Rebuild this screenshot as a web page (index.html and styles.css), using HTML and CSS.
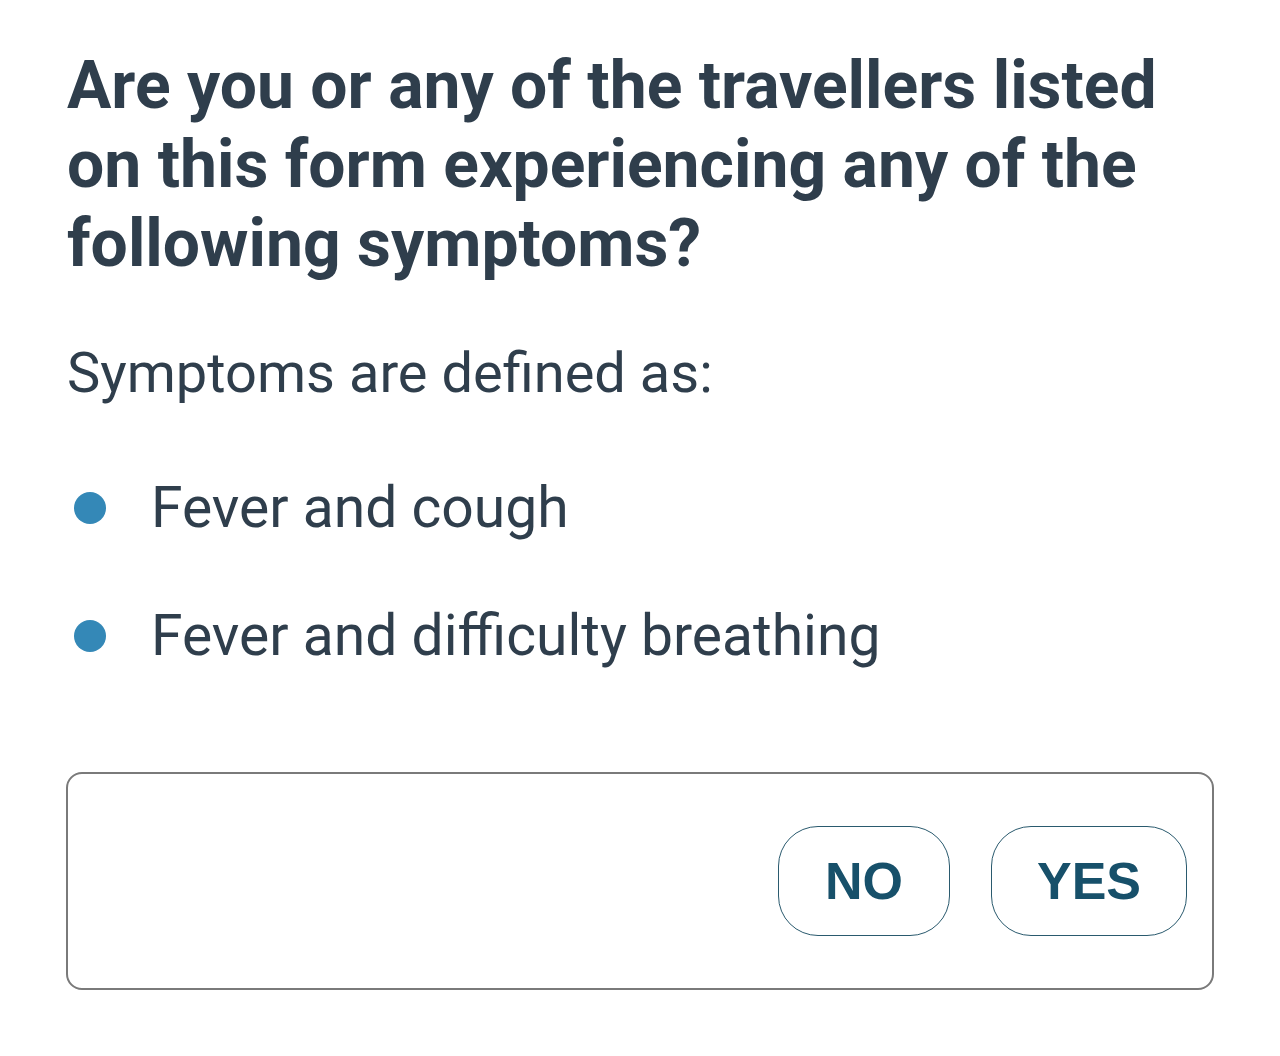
FILE: index.html
```html
<!DOCTYPE html>
<html>
<head>
<meta charset="utf-8">
<link rel="stylesheet" href="styles.css">
</head>
<body>
<main class="page">
  <h1 class="question">Are you or any of the travellers listed on this form experiencing any of the following symptoms?</h1>
  <p class="intro">Symptoms are defined as:</p>
  <ul class="symptoms">
    <li class="symptom"><span class="dot"></span><span>Fever and cough</span></li>
    <li class="symptom"><span class="dot"></span><span>Fever and difficulty breathing</span></li>
  </ul>
  <div class="answer-box">
    <button class="btn btn-no">NO</button>
    <button class="btn btn-yes">YES</button>
  </div>
</main>
</body>
</html>
```
FILE: styles.css
```css
html, body {
  margin: 0;
  padding: 0;
  background: #ffffff;
}
.page {
  padding: 46px 67px 0 67px;
  font-family: Roboto, "Noto Sans", sans-serif;
  color: #2f3e4c;
}
.question {
  margin: 0;
  font-size: 66px;
  font-weight: 700;
  line-height: 79px;
  letter-spacing: 0;
  width: 1130px;
}
.intro {
  margin: 55px 0 0 0;
  font-size: 56px;
  line-height: 70px;
  font-weight: 400;
}
.symptoms {
  list-style: none;
  margin: 65px 0 0 0;
  padding: 0;
}
.symptom {
  display: flex;
  align-items: center;
  font-size: 57px;
  line-height: 70px;
  height: 70px;
  margin-bottom: 58px;
}
.dot {
  width: 32px;
  height: 32px;
  border-radius: 50%;
  background: #3488b7;
  margin-left: 7px;
  margin-right: 45px;
  flex: none;
}
.answer-box {
  margin-top: 101px;
  width: 1148px;
  height: 218px;
  border: 2px solid #7a7a7a;
  border-radius: 16px;
  display: flex;
  justify-content: flex-end;
  align-items: center;
  gap: 41px;
  padding-right: 25px;
  box-sizing: border-box;
  margin-left: -1px;
}
.btn {
  height: 110px;
  border: 1.5px solid #2a5a6e;
  border-radius: 40px;
  background: #ffffff;
  color: #17506a;
  font-family: "Liberation Sans", Arial, sans-serif;
  font-weight: 700;
  font-size: 52px;
  padding: 0;
  margin-top: 0;
}
.btn-no { width: 172px; }
.btn-yes { width: 196px; }
```
